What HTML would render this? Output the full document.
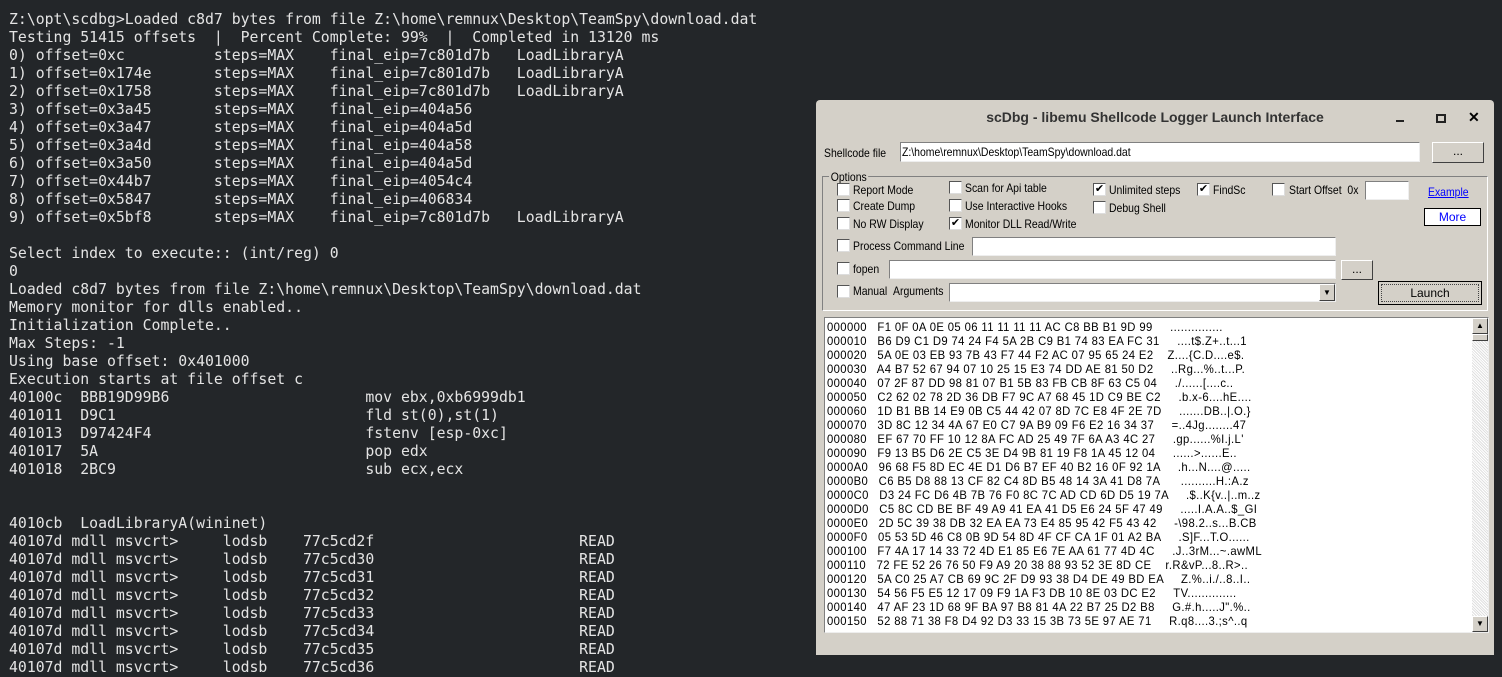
<!DOCTYPE html>
<html><head><meta charset="utf-8"><style>
body{margin:0;width:1502px;height:662px;overflow:hidden;background:#232629;position:relative;font-family:"Liberation Sans",sans-serif}
pre{position:absolute;left:9px;top:11px;margin:0;font:14.8px/18px "DejaVu Sans Mono",monospace;color:#e4e4e4}
#dlg{position:absolute;left:816px;top:100px;width:678px;height:555px;background:#d4d0c8;border-radius:4px 4px 0 0}
.a{position:absolute;font-size:12px;color:#000;white-space:nowrap;transform:scaleX(.87);transform-origin:0 0}
.cb{position:absolute;width:11px;height:11px;background:#fff;border:1px solid #555;border-right-color:#ddd;border-bottom-color:#ddd;font-size:11px;line-height:11px;text-align:center}
.in{position:absolute;background:#fff;border:1px solid #808080;border-right-color:#eee;border-bottom-color:#eee}
.bt{position:absolute;background:#d4d0c8;border:1px solid #fff;border-right-color:#404040;border-bottom-color:#404040;text-align:center;font-size:12px}
#hex{position:absolute;left:8px;top:217px;width:663px;height:314px;background:#fff;border:1px solid #808080;border-right-color:#eee;border-bottom-color:#eee;overflow:hidden}
.ht{font:12px/14px "Liberation Sans",sans-serif;white-space:pre;position:absolute;left:2px;top:2px;transform:scaleX(.94);transform-origin:0 0;letter-spacing:.4px}
</style></head><body>
<pre>Z:\opt\scdbg>Loaded c8d7 bytes from file Z:\home\remnux\Desktop\TeamSpy\download.dat
Testing 51415 offsets  |  Percent Complete: 99%  |  Completed in 13120 ms
0) offset=0xc          steps=MAX    final_eip=7c801d7b   LoadLibraryA
1) offset=0x174e       steps=MAX    final_eip=7c801d7b   LoadLibraryA
2) offset=0x1758       steps=MAX    final_eip=7c801d7b   LoadLibraryA
3) offset=0x3a45       steps=MAX    final_eip=404a56
4) offset=0x3a47       steps=MAX    final_eip=404a5d
5) offset=0x3a4d       steps=MAX    final_eip=404a58
6) offset=0x3a50       steps=MAX    final_eip=404a5d
7) offset=0x44b7       steps=MAX    final_eip=4054c4
8) offset=0x5847       steps=MAX    final_eip=406834
9) offset=0x5bf8       steps=MAX    final_eip=7c801d7b   LoadLibraryA

Select index to execute:: (int/reg) 0
0
Loaded c8d7 bytes from file Z:\home\remnux\Desktop\TeamSpy\download.dat
Memory monitor for dlls enabled..
Initialization Complete..
Max Steps: -1
Using base offset: 0x401000
Execution starts at file offset c
40100c  BBB19D99B6                      mov ebx,0xb6999db1
401011  D9C1                            fld st(0),st(1)
401013  D97424F4                        fstenv [esp-0xc]
401017  5A                              pop edx
401018  2BC9                            sub ecx,ecx


4010cb  LoadLibraryA(wininet)
40107d mdll msvcrt>     lodsb    77c5cd2f                       READ
40107d mdll msvcrt>     lodsb    77c5cd30                       READ
40107d mdll msvcrt>     lodsb    77c5cd31                       READ
40107d mdll msvcrt>     lodsb    77c5cd32                       READ
40107d mdll msvcrt>     lodsb    77c5cd33                       READ
40107d mdll msvcrt>     lodsb    77c5cd34                       READ
40107d mdll msvcrt>     lodsb    77c5cd35                       READ
40107d mdll msvcrt>     lodsb    77c5cd36                       READ</pre>
<div id="dlg">
<div style="position:absolute;left:0;width:678px;top:9px;text-align:center;font-size:14px;font-weight:bold;color:#333">scDbg - libemu Shellcode Logger Launch Interface</div>
<div style="position:absolute;left:580px;top:20px;width:8px;height:2px;background:#222"></div>
<div style="position:absolute;left:620px;top:14px;width:6px;height:5px;border:2px solid #222"></div>
<div style="position:absolute;left:652px;top:9px;font-size:14px;font-weight:bold">✕</div>
<div class="a" style="left:8px;top:46px">Shellcode file</div>
<div class="in" style="left:84px;top:42px;width:518px;height:18px"><span class="a" style="left:1px;top:2px">Z:\home\remnux\Desktop\TeamSpy\download.dat</span></div>
<div class="bt" style="left:616px;top:42px;width:50px;height:19px;line-height:17px">...</div>
<div style="position:absolute;left:6px;top:76px;width:664px;height:133px;border:1px solid #808080;border-right-color:#fff;border-bottom-color:#fff"></div>
<div class="a" style="left:13px;top:70px;background:#d4d0c8;padding:0 2px">Options</div>
<div class="cb" style="left:21px;top:83px"></div><div class="a" style="left:37px;top:83px">Report Mode</div>
<div class="cb" style="left:21px;top:99px"></div><div class="a" style="left:37px;top:99px">Create Dump</div>
<div class="cb" style="left:21px;top:117px"></div><div class="a" style="left:37px;top:117px">No RW Display</div>
<div class="cb" style="left:133px;top:81px"></div><div class="a" style="left:149px;top:81px">Scan for Api table</div>
<div class="cb" style="left:133px;top:99px"></div><div class="a" style="left:149px;top:99px">Use Interactive Hooks</div>
<div class="cb" style="left:133px;top:117px">✔</div><div class="a" style="left:149px;top:117px">Monitor DLL Read/Write</div>
<div class="cb" style="left:277px;top:83px">✔</div><div class="a" style="left:293px;top:83px">Unlimited steps</div>
<div class="cb" style="left:277px;top:101px"></div><div class="a" style="left:293px;top:101px">Debug Shell</div>
<div class="cb" style="left:381px;top:83px">✔</div><div class="a" style="left:397px;top:83px">FindSc</div>
<div class="cb" style="left:456px;top:83px"></div><div class="a" style="left:473px;top:83px">Start Offset &nbsp;0x</div>
<div class="in" style="left:549px;top:81px;width:42px;height:17px"></div>
<div class="a" style="left:612px;top:85px;color:#00f;text-decoration:underline">Example</div>
<div style="position:absolute;left:608px;top:108px;width:55px;height:16px;background:#fff;border:1px solid #000;color:#00f;font-size:12px;text-align:center;line-height:16px">More</div>
<div class="cb" style="left:21px;top:139px"></div><div class="a" style="left:37px;top:139px">Process Command Line</div>
<div class="in" style="left:156px;top:137px;width:362px;height:17px"></div>
<div class="cb" style="left:21px;top:162px"></div><div class="a" style="left:37px;top:162px">fopen</div>
<div class="in" style="left:73px;top:160px;width:445px;height:17px"></div>
<div class="bt" style="left:525px;top:160px;width:30px;height:18px;line-height:16px">...</div>
<div class="cb" style="left:21px;top:185px"></div><div class="a" style="left:37px;top:184px">Manual &nbsp;Arguments</div>
<div class="in" style="left:133px;top:183px;width:385px;height:17px"><div class="bt" style="right:0;top:0;width:14px;height:15px;font-size:8px;line-height:15px">▼</div></div>
<div class="bt" style="left:562px;top:181px;width:102px;height:22px;line-height:22px;border:1px solid #000;outline:1px dotted #444;outline-offset:-4px">Launch</div>
<div id="hex"><div class="ht">000000   F1 0F 0A 0E 05 06 11 11 11 11 AC C8 BB B1 9D 99     ...............
000010   B6 D9 C1 D9 74 24 F4 5A 2B C9 B1 74 83 EA FC 31     ....t$.Z+..t...1
000020   5A 0E 03 EB 93 7B 43 F7 44 F2 AC 07 95 65 24 E2    Z....{C.D....e$.
000030   A4 B7 52 67 94 07 10 25 15 E3 74 DD AE 81 50 D2     ..Rg...%..t...P.
000040   07 2F 87 DD 98 81 07 B1 5B 83 FB CB 8F 63 C5 04     ./......[....c..
000050   C2 62 02 78 2D 36 DB F7 9C A7 68 45 1D C9 BE C2     .b.x-6....hE....
000060   1D B1 BB 14 E9 0B C5 44 42 07 8D 7C E8 4F 2E 7D     .......DB..|.O.}
000070   3D 8C 12 34 4A 67 E0 C7 9A B9 09 F6 E2 16 34 37     =..4Jg........47
000080   EF 67 70 FF 10 12 8A FC AD 25 49 7F 6A A3 4C 27     .gp......%I.j.L'
000090   F9 13 B5 D6 2E C5 3E D4 9B 81 19 F8 1A 45 12 04     ......>......E..
0000A0   96 68 F5 8D EC 4E D1 D6 B7 EF 40 B2 16 0F 92 1A     .h...N....@.....
0000B0   C6 B5 D8 88 13 CF 82 C4 8D B5 48 14 3A 41 D8 7A      ..........H.:A.z
0000C0   D3 24 FC D6 4B 7B 76 F0 8C 7C AD CD 6D D5 19 7A     .$..K{v..|..m..z
0000D0   C5 8C CD BE BF 49 A9 41 EA 41 D5 E6 24 5F 47 49     .....I.A.A..$_GI
0000E0   2D 5C 39 38 DB 32 EA EA 73 E4 85 95 42 F5 43 42     -\98.2..s...B.CB
0000F0   05 53 5D 46 C8 0B 9D 54 8D 4F CF CA 1F 01 A2 BA     .S]F...T.O......
000100   F7 4A 17 14 33 72 4D E1 85 E6 7E AA 61 77 4D 4C     .J..3rM...~.awML
000110   72 FE 52 26 76 50 F9 A9 20 38 88 93 52 3E 8D CE    r.R&vP...8..R>..
000120   5A C0 25 A7 CB 69 9C 2F D9 93 38 D4 DE 49 BD EA     Z.%..i./..8..I..
000130   54 56 F5 E5 12 17 09 F9 1A F3 DB 10 8E 03 DC E2     TV..............
000140   47 AF 23 1D 68 9F BA 97 B8 81 4A 22 B7 25 D2 B8     G.#.h.....J".%..
000150   52 88 71 38 F8 D4 92 D3 33 15 3B 73 5E 97 AE 71     R.q8....3.;s^..q</div>
<div style="position:absolute;right:0;top:0;width:16px;height:314px;background:repeating-linear-gradient(45deg,#e0e0e0 0 1px,#fff 1px 2px)"></div>
<div class="bt" style="right:0;top:0;width:14px;height:14px;font-size:8px;line-height:14px">▲</div>
<div class="bt" style="right:0;top:16px;width:14px;height:5px"></div>
<div class="bt" style="right:0;bottom:0;width:14px;height:14px;font-size:8px;line-height:14px">▼</div>
</div>
</div>
</body></html>
